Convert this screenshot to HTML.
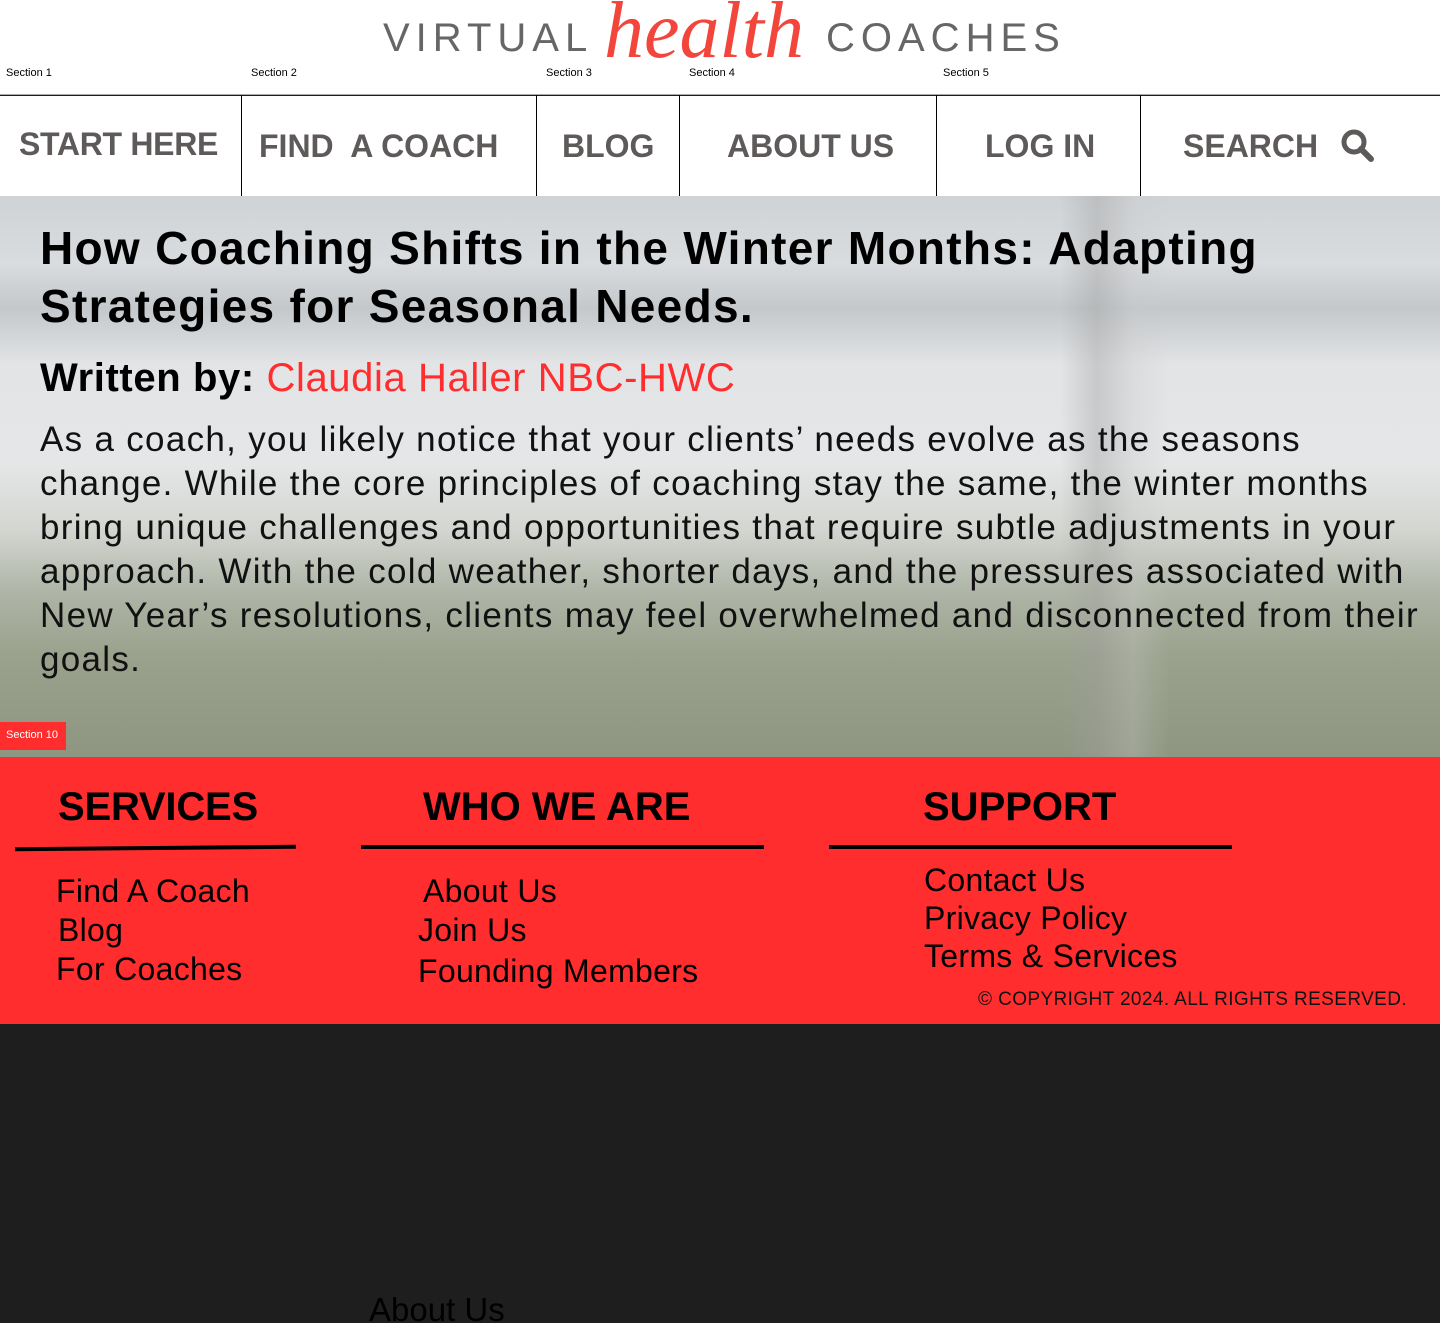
<!DOCTYPE html>
<html><head><meta charset="utf-8"><style>
*{margin:0;padding:0;box-sizing:border-box}
html,body{width:1440px;height:1323px;overflow:hidden}
body{position:relative;background:#1e1e1e;font-family:"Liberation Sans",sans-serif}
.a{position:absolute;white-space:nowrap}
.sec{font-size:11px;color:#000;top:67px}
.nav{font-size:32px;font-weight:bold;color:#5e5a59;top:128px}
.vl{position:absolute;top:95px;height:101px;width:1px;background:#000}
.ft{font-size:32px;color:#000;letter-spacing:0.3px}
</style></head><body>
<div class="a" style="left:0;top:0;width:1440px;height:95px;background:#fff;border-bottom:1px solid #aaa"></div>
<div class="a" style="left:383px;top:16px;font-size:40px;letter-spacing:6px;color:#666">VIRTUAL</div>
<div class="a" style="left:604px;top:-14px;font-size:80px;font-style:italic;font-family:'Liberation Serif',serif;color:#f2463c">health</div>
<div class="a" style="left:826px;top:16px;font-size:40px;letter-spacing:6px;color:#666">COACHES</div>
<div class="a sec" style="left:6px">Section 1</div>
<div class="a sec" style="left:251px">Section 2</div>
<div class="a sec" style="left:546px">Section 3</div>
<div class="a sec" style="left:689px">Section 4</div>
<div class="a sec" style="left:943px">Section 5</div>
<div class="a" style="left:0;top:96px;width:1440px;height:100px;background:#fff"></div>
<div class="vl" style="left:241px"></div><div class="vl" style="left:536px"></div><div class="vl" style="left:679px"></div><div class="vl" style="left:936px"></div><div class="vl" style="left:1140px"></div>
<div class="a nav" style="left:19px;top:126px;letter-spacing:-0.3px">START HERE</div>
<div class="a nav" style="left:259px">FIND&nbsp; A COACH</div>
<div class="a nav" style="left:562px">BLOG</div>
<div class="a nav" style="left:727px">ABOUT US</div>
<div class="a nav" style="left:985px">LOG IN</div>
<div class="a nav" style="left:1183px">SEARCH</div>
<svg class="a" style="left:1340px;top:128px" width="36" height="36" viewBox="0 0 36 36"><circle cx="14" cy="14" r="10" fill="none" stroke="#5e5a59" stroke-width="5"/><line x1="21" y1="21" x2="31" y2="31" stroke="#5e5a59" stroke-width="6" stroke-linecap="round"/></svg>
<div class="a" style="left:0;top:196px;width:1440px;height:561px;background:linear-gradient(180deg,#cfd3d6 0%,#d9dcdf 12%,#c4c8cb 20%,#e2e4e6 30%,#e4e6e7 48%,#d2d5cf 60%,#b0b6a8 70%,#9aa18c 82%,#8e9580 100%)"></div>
<div class="a" style="left:1060px;top:196px;width:110px;height:561px;background:linear-gradient(90deg,rgba(180,180,180,0),rgba(160,160,160,.4),rgba(200,200,200,.3),rgba(180,180,180,0))"></div>
<div class="a" style="left:40px;top:219px;font-size:46px;font-weight:bold;line-height:58px;color:#000;letter-spacing:1.3px">How Coaching Shifts in the Winter Months: Adapting<br>Strategies for Seasonal Needs.</div>
<div class="a" style="left:40px;top:356px;font-size:40px;color:#000;letter-spacing:0.6px"><b>Written by:</b> <span style="color:#ff2d2d">Claudia Haller NBC-HWC</span></div>
<div class="a" style="left:40px;top:418px;font-size:35px;line-height:44px;color:#111;letter-spacing:1.3px">As a coach, you likely notice that your clients’ needs evolve as the seasons<br>change. While the core principles of coaching stay the same, the winter months<br>bring unique challenges and opportunities that require subtle adjustments in your<br>approach. With the cold weather, shorter days, and the pressures associated with<br>New Year’s resolutions, clients may feel overwhelmed and disconnected from their<br>goals.</div>
<div class="a" style="left:0;top:722px;width:66px;height:28px;background:#ff2d2d;color:#fff;font-size:11px;padding:7px 6px">Section 10</div>
<div class="a" style="left:0;top:757px;width:1440px;height:267px;background:#ff2d2d"></div>
<div class="a" style="left:58px;top:785px;font-size:40px;font-weight:bold;letter-spacing:-0.2px">SERVICES</div>
<div class="a" style="left:423px;top:785px;font-size:40px;font-weight:bold">WHO WE ARE</div>
<div class="a" style="left:923px;top:785px;font-size:40px;font-weight:bold">SUPPORT</div>
<div class="a" style="left:15px;top:846px;width:281px;height:4px;background:#000;transform:rotate(-0.5deg)"></div>
<div class="a" style="left:361px;top:845px;width:403px;height:4px;background:#000"></div>
<div class="a" style="left:829px;top:845px;width:403px;height:4px;background:#000"></div>
<div class="a ft" style="left:56px;top:873px">Find A Coach</div>
<div class="a ft" style="left:58px;top:912px">Blog</div>
<div class="a ft" style="left:56px;top:951px">For Coaches</div>
<div class="a ft" style="left:423px;top:873px">About Us</div>
<div class="a ft" style="left:418px;top:912px">Join Us</div>
<div class="a ft" style="left:418px;top:953px">Founding Members</div>
<div class="a ft" style="left:924px;top:862px">Contact Us</div>
<div class="a ft" style="left:924px;top:900px">Privacy Policy</div>
<div class="a ft" style="left:924px;top:938px">Terms &amp; Services</div>
<div class="a" style="left:978px;top:989px;font-size:19px;color:#111;letter-spacing:0.4px">© COPYRIGHT 2024. ALL RIGHTS RESERVED.</div>
<div class="a" style="left:369px;top:1291px;font-size:33px;color:#000">About Us</div>
</body></html>
